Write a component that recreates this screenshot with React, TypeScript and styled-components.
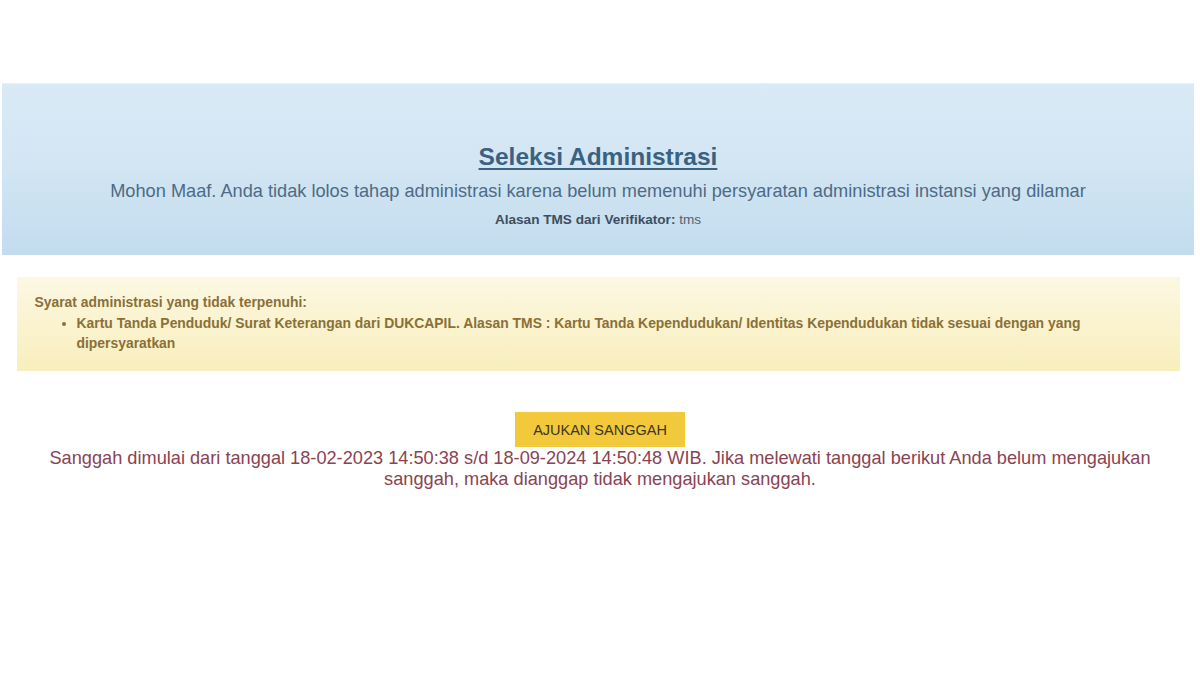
import styled, { createGlobalStyle } from "styled-components";

const GlobalStyle = createGlobalStyle`
    html, body {
        margin: 0;
        padding: 0;
        background: #fff;
        font-family: "Liberation Sans", Arial, Helvetica, sans-serif;
    }
`

const Page = styled.div`
    width: 1200px;
    height: 675px;
    padding-top: 83px;
    box-sizing: border-box;
    display: flex;
    flex-direction: column;
    align-items: center;
`

const InfoBox = styled.div`
    width: 1192px;
    height: 172px;
    margin-left: -4px;
    box-sizing: border-box;
    background: linear-gradient(to bottom, #d9eaf6 0%, #d3e6f3 45%, #c2dcee 100%);
    border-top: 1px solid #e6f1f9;
    display: flex;
    flex-direction: column;
    align-items: center;
    padding-top: 58px;
`

const Title = styled.h2`
    margin: 0;
    font-size: 24.5px;
    font-weight: 700;
    color: #3b6181;
    text-decoration: underline;
    text-underline-offset: 3px;
    text-decoration-thickness: 2px;
    line-height: 30px;
`

const Message = styled.p`
    margin: 8px 0 0;
    font-size: 18.2px;
    color: #4d6b86;
    line-height: 22px;
`

const Reason = styled.p`
    margin: 10px 0 0;
    font-size: 13.6px;
    color: #55636f;
    line-height: 16px;

    b {
        color: #3e4e5e;
    }
`

const WarningBox = styled.div`
    width: 1163px;
    margin-top: 22px;
    margin-left: -4px;
    box-sizing: border-box;
    padding: 15px 18px 18px 18px;
    background: linear-gradient(to bottom, #fcf8e3 0%, #faf3cf 50%, #f8eebd 100%);
    color: #8a7038;
    font-size: 13.9px;
    font-weight: 700;
    line-height: 20px;
`

const WarningTitle = styled.div``

const ReqList = styled.ul`
    margin: 1px 0 0;
    padding-left: 42px;
`

const ReqItem = styled.li``

const Actions = styled.div`
    margin-top: 41px;
    display: flex;
    flex-direction: column;
    align-items: center;
`

const Button = styled.button`
    width: 170px;
    height: 35px;
    border: none;
    background: #f1c93b;
    color: #3d3522;
    font-family: inherit;
    font-size: 14.5px;
    cursor: pointer;
`

const Notice = styled.p`
    margin: 1px 0 0;
    width: 1130px;
    text-align: center;
    font-size: 18.2px;
    line-height: 21px;
    color: #8a4352;
`

export default function App() {
    return (
        <>
            <GlobalStyle/>
            <Page>
                <InfoBox>
                    <Title>Seleksi Administrasi</Title>
                    <Message>Mohon Maaf. Anda tidak lolos tahap administrasi karena belum memenuhi persyaratan administrasi instansi yang dilamar</Message>
                    <Reason><b>Alasan TMS dari Verifikator:</b> tms</Reason>
                </InfoBox>
                <WarningBox>
                    <WarningTitle>Syarat administrasi yang tidak terpenuhi:</WarningTitle>
                    <ReqList>
                        <ReqItem>Kartu Tanda Penduduk/ Surat Keterangan dari DUKCAPIL. Alasan TMS : Kartu Tanda Kependudukan/ Identitas Kependudukan tidak sesuai dengan yang dipersyaratkan</ReqItem>
                    </ReqList>
                </WarningBox>
                <Actions>
                    <Button>AJUKAN SANGGAH</Button>
                    <Notice>Sanggah dimulai dari tanggal 18-02-2023 14:50:38 s/d 18-09-2024 14:50:48 WIB. Jika melewati tanggal berikut Anda belum mengajukan sanggah, maka dianggap tidak mengajukan sanggah.</Notice>
                </Actions>
            </Page>
        </>
    );
}
